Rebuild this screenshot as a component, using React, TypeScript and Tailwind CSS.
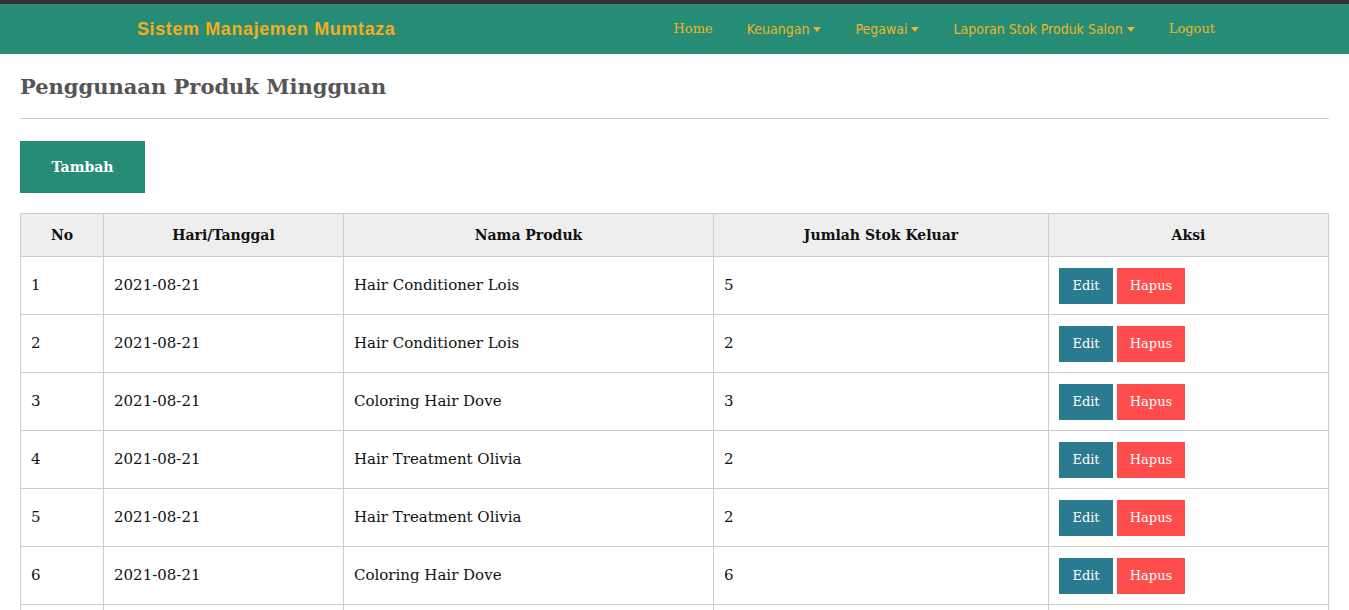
import React from "react";

const rows = [
  { no: 1, tgl: "2021-08-21", nama: "Hair Conditioner Lois", jumlah: 5 },
  { no: 2, tgl: "2021-08-21", nama: "Hair Conditioner Lois", jumlah: 2 },
  { no: 3, tgl: "2021-08-21", nama: "Coloring Hair Dove", jumlah: 3 },
  { no: 4, tgl: "2021-08-21", nama: "Hair Treatment Olivia", jumlah: 2 },
  { no: 5, tgl: "2021-08-21", nama: "Hair Treatment Olivia", jumlah: 2 },
  { no: 6, tgl: "2021-08-21", nama: "Coloring Hair Dove", jumlah: 6 },
  { no: 7, tgl: "2021-08-21", nama: "Coloring Hair Dove", jumlah: 1 },
];

const serif = "font-['DejaVu_Serif',serif]";
const narrow = "font-['DejaVu_Sans_Condensed','DejaVu_Sans',sans-serif]";

function Caret() {
  return (
    <svg width="8" height="5" viewBox="0 0 8 5" className="ml-1 inline-block">
      <path d="M0 0h8L4 5z" fill="currentColor" />
    </svg>
  );
}

function NavLink({ label, dropdown }: { label: string; dropdown?: boolean }) {
  return (
    <a
      className={`flex items-center text-[#f0b429] ${dropdown ? `text-[14px] ${narrow}` : `text-[13px] ${serif}`}`}
    >
      {label}
      {dropdown && <Caret />}
    </a>
  );
}

export default function App() {
  return (
    <div className={`min-h-screen bg-white ${serif}`}>
      <div className="h-[4px] bg-[#333]" />
      <nav className="flex h-[50px] items-center bg-[#268c76] pl-[137px]">
        <div className="font-['Liberation_Sans',sans-serif] text-[18px] font-bold tracking-[0.6px] text-[#f5ac1f]">
          Sistem Manajemen Mumtaza
        </div>
        <div className="ml-[278px] flex items-center gap-[34px]">
          <NavLink label="Home" />
          <NavLink label="Keuangan" dropdown />
          <NavLink label="Pegawai" dropdown />
          <NavLink label="Laporan Stok Produk Salon" dropdown />
          <NavLink label="Logout" />
        </div>
      </nav>

      <main className="px-[20px]">
        <h1 className="pt-[16px] pb-[14px] text-[21px] font-bold leading-[34px] text-[#555]">
          Penggunaan Produk Mingguan
        </h1>
        <hr className="border-t border-[#ccc]" />
        <button className="mt-[22px] h-[52px] w-[125px] bg-[#268c76] text-[14px] font-bold text-white">
          Tambah
        </button>

        <table className="mt-[20px] w-full border-collapse text-[15px] text-[#111]">
          <thead>
            <tr className="h-[43px] bg-[#eee] text-[14px]">
              <th className="w-[83px] border border-[#ccc] font-bold">No</th>
              <th className="w-[240px] border border-[#ccc] font-bold">Hari/Tanggal</th>
              <th className="w-[370px] border border-[#ccc] font-bold">Nama Produk</th>
              <th className="w-[335px] border border-[#ccc] font-bold">Jumlah Stok Keluar</th>
              <th className="border border-[#ccc] font-bold">Aksi</th>
            </tr>
          </thead>
          <tbody>
            {rows.map((r) => (
              <tr key={r.no} className="h-[58px]">
                <td className="border border-[#ccc] px-[10px]">{r.no}</td>
                <td className="border border-[#ccc] px-[10px]">{r.tgl}</td>
                <td className="border border-[#ccc] px-[10px]">{r.nama}</td>
                <td className="border border-[#ccc] px-[10px]">{r.jumlah}</td>
                <td className="border border-[#ccc] px-[10px]">
                  <div className="flex gap-[4px]">
                    <button className="h-[36px] w-[54px] bg-[#2a7b8f] text-[13px] text-white">
                      Edit
                    </button>
                    <button className="h-[36px] w-[68px] bg-[#ff4d4d] text-[13px] text-white">
                      Hapus
                    </button>
                  </div>
                </td>
              </tr>
            ))}
          </tbody>
        </table>
      </main>
    </div>
  );
}
